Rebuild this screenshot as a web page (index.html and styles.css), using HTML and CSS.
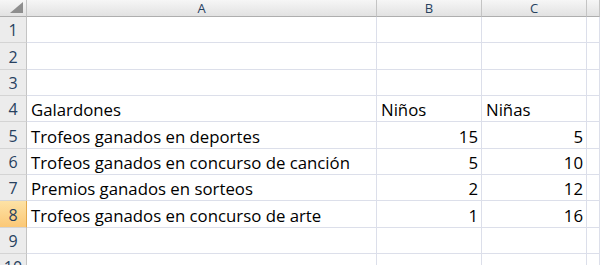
FILE: index.html
```html
<!DOCTYPE html>
<html lang="es">
<head>
    <meta charset="UTF-8">
    <title>Galardones</title>
    <link rel="stylesheet" href="styles.css">
</head>
<body>
    <div class="sheet">
        <!-- Column headers -->
        <div class="corner"><span class="corner_tri"></span></div>
        <div class="col_head">A</div>
        <div class="col_head">B</div>
        <div class="col_head">C</div>
        <div class="col_head"></div>

        <div class="row_head">1</div><div class="cell"></div><div class="cell"></div><div class="cell"></div><div class="cell"></div>
        <div class="row_head">2</div><div class="cell"></div><div class="cell"></div><div class="cell"></div><div class="cell"></div>
        <div class="row_head">3</div><div class="cell"></div><div class="cell"></div><div class="cell"></div><div class="cell"></div>

        <div class="row_head">4</div>
        <div class="cell">Galardones</div>
        <div class="cell">Niños</div>
        <div class="cell">Niñas</div>
        <div class="cell"></div>

        <div class="row_head">5</div>
        <div class="cell">Trofeos ganados en deportes</div>
        <div class="cell num">15</div>
        <div class="cell num">5</div>
        <div class="cell"></div>

        <div class="row_head">6</div>
        <div class="cell">Trofeos ganados en concurso de canción</div>
        <div class="cell num">5</div>
        <div class="cell num">10</div>
        <div class="cell"></div>

        <div class="row_head">7</div>
        <div class="cell">Premios ganados en sorteos</div>
        <div class="cell num">2</div>
        <div class="cell num">12</div>
        <div class="cell"></div>

        <div class="row_head row_active">8</div>
        <div class="cell">Trofeos ganados en concurso de arte</div>
        <div class="cell num">1</div>
        <div class="cell num">16</div>
        <div class="cell"></div>

        <div class="row_head">9</div><div class="cell"></div><div class="cell"></div><div class="cell"></div><div class="cell"></div>
        <div class="row_head">10</div><div class="cell"></div><div class="cell"></div><div class="cell"></div><div class="cell"></div>
    </div>
</body>
</html>
```

FILE: styles.css
```css
* {
    margin: 0;
    padding: 0;
    box-sizing: border-box;
}

body {
    width: 600px;
    height: 265px;
    overflow: hidden;
    background: #fff;
    font-family: "Open Sans", Lato, sans-serif;
}

/* Sheet grid */
.sheet {
    display: grid;
    grid-template-columns: 27px 350px 105px 105px 1fr;
    grid-template-rows: 17px;
    grid-auto-rows: 26.33px;
}

/* Header cells */
.corner,
.col_head {
    background: linear-gradient(#f6f6f6, #e2e2e2);
    border-right: 1px solid #c4c4c4;
    border-bottom: 1px solid #aeaeae;
}

.corner {
    position: relative;
}

.corner_tri {
    position: absolute;
    right: 3px;
    bottom: 3px;
    width: 0;
    height: 0;
    border-left: 13px solid transparent;
    border-bottom: 11px solid #8e8e8e;
}

.col_head {
    font-size: 13px;
    line-height: 16px;
    text-align: center;
    color: #27415f;
}

.row_head {
    background: #ececec;
    border-right: 1px solid #c4c4c4;
    border-bottom: 1px solid #d4d4d4;
    color: #27415f;
    font-size: 16px;
    line-height: 20px;
    display: flex;
    align-items: flex-end;
    justify-content: center;
    padding-bottom: 2px;
}

.row_active {
    background: linear-gradient(#fde2a5, #fbc877);
    border-right-color: #e2a84c;
}

/* Data cells */
.cell {
    border-right: 1px solid #dcdfea;
    border-bottom: 1px solid #dcdfea;
    color: #000;
    font-size: 16.8px;
    line-height: 20px;
    padding: 0 3px 1px 4px;
    display: flex;
    align-items: flex-end;
    white-space: nowrap;
    overflow: hidden;
}

.num {
    justify-content: flex-end;
}
```
